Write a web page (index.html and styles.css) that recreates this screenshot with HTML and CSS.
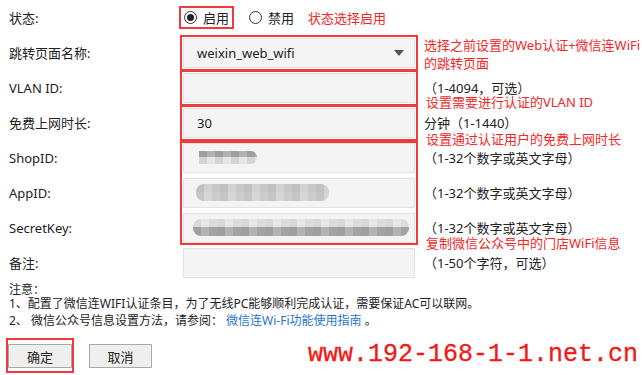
FILE: index.html
```html
<!DOCTYPE html>
<html lang="zh-CN">
<head>
<meta charset="utf-8">
<title>微信连WiFi认证</title>
<link rel="stylesheet" href="styles.css">
</head>
<body>
<div class="page">
  <div class="form">
    <div class="label">状态:</div>
    <div class="ctrl wide">
      <div class="state">
        <span class="mark-box"><span class="opt"><span class="radio on"></span>启用</span></span>
        <span class="opt"><span class="radio"></span>禁用</span>
        <span class="red-note">状态选择启用</span>
      </div>
    </div>

    <div class="label">跳转页面名称:</div>
    <div class="ctrl">
      <div class="mark">
        <div class="field select"><span>weixin_web_wifi</span><span class="caret"></span></div>
      </div>
    </div>
    <div class="hint two-red">选择之前设置的Web认证+微信连WiFi<br>的跳转页面</div>

    <div class="label">VLAN ID:</div>
    <div class="ctrl">
      <div class="mark"><div class="field"></div></div>
    </div>
    <div class="hint">（1-4094，可选）<span class="anno anno-vlan">设置需要进行认证的VLAN ID</span></div>

    <div class="label">免费上网时长:</div>
    <div class="ctrl">
      <div class="mark"><div class="field"><span>30</span></div></div>
    </div>
    <div class="hint">分钟（1-1440）<span class="anno anno-time">设置通过认证用户的免费上网时长</span></div>

    <div class="label">ShopID:</div>
    <div class="ctrl span3">
      <div class="mark group">
        <div class="field"><span class="blur blur-shop"></span></div>
        <div class="field"><span class="blur blur-app"></span></div>
        <div class="field"><span class="blur blur-key"></span></div>
      </div>
    </div>
    <div class="hint">（1-32个数字或英文字母）</div>

    <div class="label">AppID:</div>
    <div class="hint">（1-32个数字或英文字母）</div>

    <div class="label">SecretKey:</div>
    <div class="hint">（1-32个数字或英文字母）<span class="anno anno-key">复制微信公众号中的门店WiFi信息</span></div>

    <div class="label">备注:</div>
    <div class="ctrl">
      <div class="field plain"></div>
    </div>
    <div class="hint">（1-50个字符，可选）</div>
  </div>

  <div class="notes">
    <div class="n0">注意：</div>
    <div class="n1">1、配置了微信连WIFI认证条目，为了无线PC能够顺利完成认证，需要保证AC可以联网。</div>
    <div class="n2">2、 微信公众号信息设置方法，请参阅： <a class="link" href="#">微信连Wi-Fi功能使用指南</a> 。</div>
  </div>

  <div class="actions">
    <span class="btn-mark"><button class="btn">确定</button></span>
    <button class="btn">取消</button>
  </div>

  <div class="watermark">www.192-168-1-1.net.cn</div>
</div>
</body>
</html>
```

FILE: styles.css
```css
html, body {
  margin: 0;
  padding: 0;
  background: #fff;
}
body {
  width: 642px;
  height: 375px;
  overflow: hidden;
  font-family: "Noto Sans", "Noto Sans CJK SC", sans-serif;
  font-size: 13px;
  color: #333;
}
.page {
  position: relative;
  width: 642px;
  height: 375px;
}
.form {
  display: grid;
  grid-template-columns: 180px 244px 1fr;
  grid-auto-rows: 35px;
}
.label {
  grid-column: 1;
  padding-left: 9px;
  display: flex;
  align-items: center;
  white-space: nowrap;
  color: #222;
}
.ctrl {
  grid-column: 2;
  display: flex;
  align-items: center;
}
.ctrl.wide {
  grid-column: 2 / 4;
}
.ctrl.span3 {
  grid-row: span 3;
}
.hint {
  grid-column: 3;
  position: relative;
  display: flex;
  align-items: center;
  white-space: nowrap;
  line-height: 14px;
  color: #222;
}
.hint.two-red {
  color: #f02828;
  line-height: 18px;
  align-items: flex-start;
  padding-top: 1px;
}
.anno {
  position: absolute;
  left: 2px;
  line-height: 14px;
  color: #f02828;
}
.anno-vlan { top: 25px; }
.anno-time { top: 27px; }
.anno-key { top: 26px; }

.state {
  display: flex;
  align-items: center;
}
.mark-box {
  border: 2px solid #ef3b3b;
  height: 19px;
  padding: 0 3px;
  margin-left: -1px;
  display: flex;
  align-items: center;
}
.opt {
  display: inline-flex;
  align-items: center;
  gap: 6px;
  color: #222;
}
.state > .opt {
  margin-left: 15px;
}
.radio {
  width: 11px;
  height: 11px;
  border: 1px solid #333;
  border-radius: 50%;
  background: #fff;
  display: inline-flex;
  align-items: center;
  justify-content: center;
}
.radio.on::after {
  content: "";
  width: 7px;
  height: 7px;
  border-radius: 50%;
  background: #222;
}
.red-note {
  margin-left: 14px;
  color: #f02828;
}
.mark {
  border: 2px solid #ef3b3b;
  padding: 1px;
}
.mark.group {
  display: flex;
  flex-direction: column;
  gap: 5px;
  padding: 0 1px;
}
.field {
  box-sizing: border-box;
  width: 232px;
  height: 30px;
  background: #f4f4f4;
  border: 1px solid #e2e2e2;
  display: flex;
  align-items: center;
  padding-left: 13px;
  color: #222;
}
.field.plain {
  margin-left: 3px;
}
.select {
  justify-content: space-between;
  padding-right: 10px;
}
.caret {
  width: 0;
  height: 0;
  border-left: 5px solid transparent;
  border-right: 5px solid transparent;
  border-top: 6px solid #555;
}
.blur {
  display: block;
  border-radius: 8px;
}
.blur-shop {
  width: 58px;
  height: 13px;
  margin-left: 2px;
  border-radius: 0 6px 6px 0;
  background-image:
    repeating-linear-gradient(90deg, rgba(0,0,0,0.06) 0 8px, rgba(255,255,255,0.1) 8px 16px),
    linear-gradient(#a9a9a9 0 50%, #e2e2e2 50% 100%);
}
.blur-app {
  width: 133px;
  height: 17px;
  margin-left: -1px;
  background-image:
    repeating-linear-gradient(90deg, rgba(0,0,0,0.05) 0 8px, rgba(255,255,255,0.12) 8px 16px, rgba(0,0,0,0.02) 16px 24px),
    linear-gradient(#cbcbcb 0 50%, #d0d0d0 50% 100%);
}
.blur-key {
  width: 216px;
  height: 17px;
  margin-left: -4px;
  background-image:
    repeating-linear-gradient(90deg, rgba(0,0,0,0.05) 0 8px, rgba(255,255,255,0.12) 8px 16px, rgba(0,0,0,0.03) 16px 24px),
    linear-gradient(#e4e4e4 0 50%, #a8a8a8 50% 100%);
}

.notes {
  padding-left: 9px;
  margin-top: 3px;
  white-space: nowrap;
  font-size: 12px;
  color: #222;
}
.n0 { line-height: 14px; }
.n1 { line-height: 14px; }
.n2 { line-height: 20px; }
.link {
  color: #1f74cf;
  text-decoration: none;
}
.actions {
  display: flex;
  align-items: flex-start;
  padding-left: 6px;
  margin-top: 7px;
}
.btn-mark {
  border: 2px solid #ef3b3b;
  padding: 4px 0 3px 0;
  display: inline-flex;
  width: 64px;
}
.btn {
  box-sizing: border-box;
  width: 64px;
  height: 24px;
  margin: 0;
  padding: 0;
  font-family: "Noto Sans", "Noto Sans CJK SC", sans-serif;
  font-size: 13px;
  color: #222;
  background: #efefef;
  border: 1px solid #aaa;
  border-radius: 0;
}
.actions > .btn {
  margin-left: 15px;
  margin-top: 6px;
  width: 63px;
}
.watermark {
  position: absolute;
  right: 4px;
  top: 340px;
  font-family: "Liberation Mono", monospace;
  font-size: 25px;
  line-height: 30px;
  color: #f21818;
  -webkit-text-stroke: 0.3px #f21818;
  white-space: nowrap;
}
```
